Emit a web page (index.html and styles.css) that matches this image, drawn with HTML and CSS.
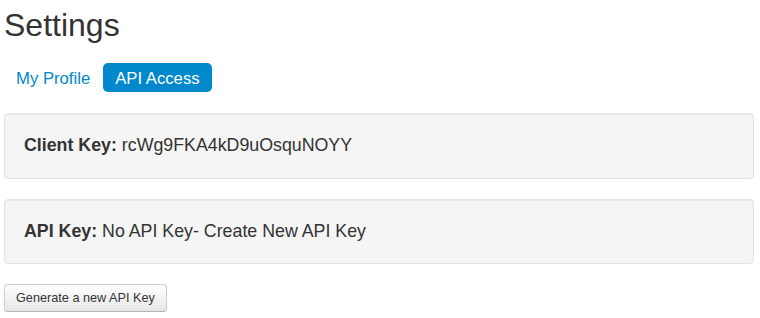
FILE: index.html
```html
<!DOCTYPE html>
<html lang="en">
<head>
<meta charset="utf-8">
<title>Settings</title>
<link rel="stylesheet" href="styles.css">
</head>
<body>
<div class="page">
  <h1 class="title">Settings</h1>
  <ul class="pills">
    <li><a href="#">My Profile</a></li>
    <li class="active"><a href="#">API Access</a></li>
  </ul>
  <div class="well"><strong>Client Key:</strong> rcWg9FKA4kD9uOsquNOYY</div>
  <div class="well"><strong>API Key:</strong> No API Key- Create New API Key</div>
  <button class="btn" type="button">Generate a new API Key</button>
</div>
</body>
</html>
```
FILE: styles.css
```css
html, body {
  margin: 0;
  padding: 0;
  background: #fff;
}
body {
  font-family: "Liberation Sans", Arial, sans-serif;
  color: #333;
}
.page {
  padding: 0 6px 0 4px;
}
.title {
  margin: 5px 0 0;
  font-size: 32px;
  line-height: 40px;
  font-weight: normal;
  color: #333;
}
.pills {
  list-style: none;
  margin: 18px 0 21px;
  padding: 0;
  display: flex;
  gap: 1px;
}
.pills a {
  display: block;
  padding: 6px 12px 4px 12px;
  font-size: 16.7px;
  line-height: 19px;
  color: #0088cc;
  text-decoration: none;
  border-radius: 5px;
}
.pills .active a {
  background: #0088cc;
  color: #fff;
}
.well {
  min-height: 20px;
  padding: 19px;
  margin-bottom: 20px;
  background: #f5f5f5;
  border: 1px solid #e3e3e3;
  border-radius: 4px;
  box-shadow: inset 0 1px 1px rgba(0,0,0,0.05);
  font-size: 17.8px;
  line-height: 25.7px;
  color: #333;
}
.well strong {
  font-weight: bold;
}
.btn {
  display: inline-block;
  margin: 0;
  padding: 4px 11px;
  font-family: "Liberation Sans", Arial, sans-serif;
  font-size: 12.7px;
  line-height: 18px;
  color: #333;
  text-shadow: 0 1px 1px rgba(255,255,255,0.75);
  background-color: #f5f5f5;
  background-image: linear-gradient(to bottom, #ffffff, #e6e6e6);
  border: 1px solid #cccccc;
  border-bottom-color: #b3b3b3;
  border-radius: 4px;
  box-shadow: inset 0 1px 0 rgba(255,255,255,0.2), 0 1px 2px rgba(0,0,0,0.05);
  cursor: pointer;
}
```
